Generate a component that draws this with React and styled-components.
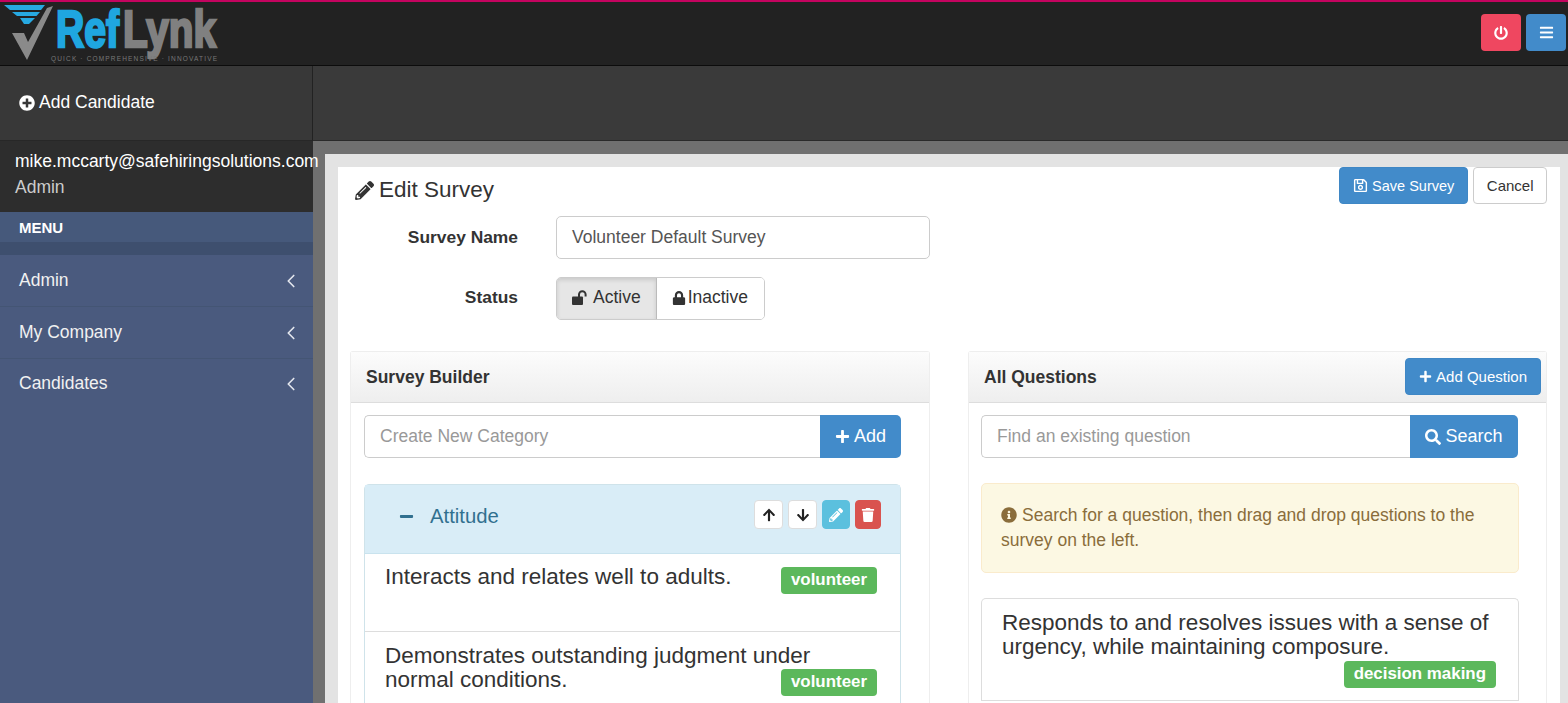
import React from 'react';
import styled, { createGlobalStyle } from 'styled-components';
import { ChevronLeft } from 'lucide-react';
import {
  FaPlusCircle, FaPencilAlt, FaRegSave, FaLock, FaPlus, FaSearch, FaInfoCircle,
  FaArrowUp, FaArrowDown, FaTrash, FaPowerOff, FaBars, FaMinus,
} from 'react-icons/fa';

const Global = createGlobalStyle`
  html, body { margin: 0; padding: 0; background: #e3e3e3; }
  body { font-family: "Liberation Sans", Arial, sans-serif; color: #333; font-size: 17.5px; }
  * { box-sizing: border-box; }
  svg { flex: none; }
`;

const Page = styled.div`
  width: 1568px; height: 703px; overflow: hidden; display: flex; flex-direction: column;
`;
const TopBar = styled.header`
  height: 66px; flex: none; background: #222; border-top: 2px solid #c4045f; border-bottom: 1px solid #0c0c0c;
  display: flex; align-items: flex-start; justify-content: space-between;
`;
const TopActions = styled.div`
  display: flex; gap: 5px; padding: 12px 0 0 0; margin-right: 2px;
`;
const TopButton = styled.button`
  width: ${p => p.$w}px; height: 37px; border: 0; border-radius: 4px; background: ${p => p.$bg}; color: #fff;
  display: flex; align-items: center; justify-content: center; padding: 0;
`;
const Main = styled.div`
  flex: 1; display: flex; min-height: 0;
`;
const Sidebar = styled.aside`
  width: 313px; flex: none; background: #4a5a7e; position: relative; z-index: 2;
`;
const AddCandidate = styled.div`
  height: 75px; background: #383838; border-right: 1px solid #222; border-bottom: 1px solid #272727;
  display: flex; align-items: center; padding: 0 0 1px 19px; color: #fff; font-size: 17.5px; gap: 4px;
`;
const UserBox = styled.div`
  height: 71px; background: #2d2d2d; padding: 7px 0 0 15px; white-space: nowrap; line-height: 26px;
`;
const Email = styled.div`
  color: #fff; font-size: 17.5px;
`;
const Role = styled.div`
  color: #ccc; font-size: 17.5px;
`;
const MenuHead = styled.div`
  height: 30px; background: #46597b; color: #fff; font-weight: 700; font-size: 15px; padding: 7px 0 0 19px;
`;
const MenuStrip = styled.div`
  height: 13px; background: #3e4f6e;
`;
const MenuItem = styled.div`
  height: ${p => p.$h}px; border-bottom: 1px solid ${p => (p.$last ? 'transparent' : '#445574')}; display: flex; align-items: center; justify-content: space-between;
  padding: 0 11px 0 19px; color: #f1f1f1; font-size: 17.5px;
`;
const Gutter = styled.main`
  flex: 1; background: #3a3a3a; min-width: 0; display: flex; flex-direction: column;
`;
const Banner = styled.div`
  height: 75px; flex: none; background: #3a3a3a; border-bottom: 1px solid #2a2a2a;
`;
const GreyFrame = styled.div`
  flex: 1; background: #707070; padding: 13px 0 0 12px; min-height: 0;
`;
const LightFrame = styled.div`
  height: 100%; background: #e3e3e3; padding: 13px 8px 0 13px;
`;
const Sheet = styled.div`
  height: 100%; background: #fff; padding: 0 13px 0 12px; overflow: hidden;
`;
const TitleRow = styled.div`
  display: flex; justify-content: space-between; align-items: flex-start; height: 49px;
`;
const Title = styled.h1`
  margin: 9px 0 0 5px; font-weight: 400; font-size: 22.5px; line-height: 28px; display: flex; align-items: center; gap: 5px; color: #333;
`;
const TitleActions = styled.div`
  display: flex; gap: 5px;
`;
const Btn = styled.button`
  height: 37px; padding: 0 ${p => p.$px ?? 13}px; border-radius: 4px; font-family: inherit; font-size: ${p => p.$fs || 15}px;
  border: 1px solid ${p => (p.$primary ? '#3f87c5' : '#ccc')};
  background: ${p => (p.$primary ? '#428bca' : '#fff')};
  color: ${p => (p.$primary ? '#fff' : '#333')};
  display: inline-flex; align-items: center; gap: 4px; white-space: nowrap;
`;
const HeadButton = styled(Btn)`
  align-self: flex-start; margin-top: 6px;
`;
const FormRow = styled.div`
  display: flex; align-items: center; margin-top: ${p => p.$mt || 0}px;
`;
const Label = styled.label`
  width: 168px; text-align: right; font-weight: 700; font-size: 17.4px; margin-right: 38px; color: #333;
  padding-bottom: ${p => p.$pb || 0}px;
`;
const TextInput = styled.div`
  width: 374px; height: 43px; border: 1px solid #ccc; border-radius: 5px; display: flex; align-items: center; padding-left: 15px;
  color: #555; font-size: 17.5px;
`;
const Toggle = styled.div`
  display: flex; height: 43px; border: 1px solid #ccc; border-radius: 5px; overflow: hidden; font-size: 17.5px; color: #333;
`;
const ToggleOption = styled.div`
  display: flex; align-items: center; gap: ${p => p.$gap}px; padding: 0 ${p => p.$pr}px 2px 15px;
  background: ${p => (p.$on ? '#e6e6e6' : '#fff')};
  box-shadow: ${p => (p.$on ? 'inset 0 2px 4px rgba(0,0,0,.13)' : 'none')};
  border-right: ${p => (p.$on ? '1px solid #bbb' : '0')};
`;
const Columns = styled.div`
  display: flex; gap: 38px; margin-top: 31px; align-items: flex-start;
`;
const Panel = styled.section`
  width: ${p => p.$w}px; flex: none; border: 1px solid #eee; border-bottom: 0; border-radius: 3px 3px 0 0; height: 400px;
`;
const PanelHead = styled.div`
  height: 51px; background: linear-gradient(#fcfcfc, #eeeeee); border-bottom: 1px solid #ddd;
  display: flex; align-items: center; justify-content: space-between; padding: 0 5px 0 15px; font-weight: 700; font-size: 17.5px; color: #333;
`;
const PanelBody = styled.div`
  padding: 12px ${p => p.$pr}px 0 ${p => p.$pl}px;
`;
const InputGroup = styled.div`
  display: flex; height: 43px; margin-right: ${p => p.$mr || 0}px;
`;
const GroupField = styled.div`
  flex: 1; border: 1px solid #ccc; border-right: 0; border-radius: 5px 0 0 5px; display: flex; align-items: center; padding-left: 15px; color: #999; font-size: 17.5px;
`;
const GroupButton = styled.button`
  width: ${p => p.$w}px; border: 0; border-radius: 0 5px 5px 0; background: #428bca; color: #fff; font-family: inherit; font-size: 18px;
  display: flex; align-items: center; justify-content: center; gap: 4px; padding: 0;
`;
const Category = styled.div`
  margin-top: 26px; border: 1px solid #cfe3ea; border-radius: 5px 5px 0 0; height: 260px;
`;
const CategoryHead = styled.div`
  height: 69px; background: #d9edf7; border-bottom: 1px solid #c9e3ee; display: flex; justify-content: space-between; align-items: flex-start;
  color: #31708f; font-size: 20.3px; padding: 0 19px 0 34px;
`;
const CategoryName = styled.div`
  display: flex; align-items: center; gap: 16px; height: 62px;
`;
const Tools = styled.div`
  display: flex; gap: 5px; padding-top: 15px;
`;
const Tool = styled.button`
  width: ${p => p.$w}px; height: 29px; border-radius: 4px; border: 1px solid ${p => p.$border}; background: ${p => p.$bg}; color: ${p => p.$color};
  display: flex; align-items: center; justify-content: center; padding: 0; font-size: 14px;
`;
const Row = styled.div`
  display: grid; height: ${p => p.$h}px; padding: ${p => p.$pad}; border-bottom: ${p => (p.$line ? '1px solid #ddd' : '0')};
`;
const RowText = styled.div`
  grid-area: 1 / 1; font-size: 22.5px; line-height: 24px; color: #333; white-space: nowrap;
`;
const Tag = styled.span`
  grid-area: 1 / 1; justify-self: end; align-self: start; margin-top: ${p => p.$mt}px; height: 27px; padding: 0 10px; border-radius: 4px; background: #5cb85c; color: #fff;
  font-weight: 700; font-size: 16.9px; line-height: 25px; white-space: nowrap;
`;
const Alert = styled.div`
  margin-top: 25px; height: 90px; background: #fcf8e3; border: 1px solid #faebcc; border-radius: 5px; color: #8a6d3b;
  padding: 19px 15px 0 19px; font-size: 17.5px; line-height: 25px;
`;
const InlineIcon = styled.span`
  display: inline-block; vertical-align: -2px; margin-right: 5px; font-size: 16px; line-height: 1;
`;
const QuestionCard = styled.div`
  margin-top: 25px; border: 1px solid #ddd; border-bottom: 0; border-radius: 5px 5px 0 0;
`;

const Logo = () => (
  <svg width="230" height="63" viewBox="0 0 230 63" role="img" aria-label="RefLynk">
    <path d="M4 3H45L41 8H10Z" fill="#27a9e1" />
    <path d="M12 10H40L36.500 14H17Z" fill="#27a9e1" />
    <path d="M20 16H35L29 22H24Z" fill="#27a9e1" />
    <path d="M12 31L24 31L28 40L47 6L53 4L27 58Z" fill="#8a8a8a" />
    <text x="56" y="45" fontFamily="Liberation Sans" fontWeight="700" fontSize="52" fill="#1fa6e0" stroke="#1fa6e0" strokeWidth="2.6" textLength="63" lengthAdjust="spacingAndGlyphs">Ref</text>
    <text x="123" y="45" fontFamily="Liberation Sans" fontWeight="700" fontSize="52" fill="#808080" stroke="#808080" strokeWidth="2.6" textLength="93" lengthAdjust="spacingAndGlyphs">Lynk</text>
    <text x="51" y="59" fontFamily="Liberation Sans" fontSize="6.500" fill="#787878" textLength="166" lengthAdjust="spacing">QUICK · COMPREHENSIVE · INNOVATIVE</text>
  </svg>
);

const OpenLock = () => (
  <svg width="17" height="15" viewBox="0 0 17 15" aria-hidden="true">
    <rect x="0" y="6.500" width="11" height="8.500" rx="1" fill="currentColor" />
    <path d="M7 7V4.500a3.300 3.300 0 0 1 6.600 0V6.500" fill="none" stroke="currentColor" strokeWidth="2" />
  </svg>
);

const Chevron = () => <ChevronLeft size={22} strokeWidth={1.8} color="#e4e7ee" />;

export default function App() {
  return (
    <Page>
      <Global />
      <TopBar>
        <Logo />
        <TopActions>
          <TopButton $w={40} $bg="#ef4760"><FaPowerOff size={14} /></TopButton>
          <TopButton $w={40} $bg="#428bca"><FaBars size={15} /></TopButton>
        </TopActions>
      </TopBar>
      <Main>
        <Sidebar>
          <AddCandidate><FaPlusCircle size={16} />Add Candidate</AddCandidate>
          <UserBox>
            <Email>mike.mccarty@safehiringsolutions.com</Email>
            <Role>Admin</Role>
          </UserBox>
          <MenuHead>MENU</MenuHead>
          <MenuStrip />
          <MenuItem $h={52}>Admin<Chevron /></MenuItem>
          <MenuItem $h={52}>My Company<Chevron /></MenuItem>
          <MenuItem $h={50} $last>Candidates<Chevron /></MenuItem>
        </Sidebar>
        <Gutter>
          <Banner />
          <GreyFrame>
            <LightFrame>
              <Sheet>
                <TitleRow>
                  <Title><FaPencilAlt size={19} />Edit Survey</Title>
                  <TitleActions>
                    <Btn $primary $fs={14.5}><FaRegSave size={15} />Save Survey</Btn>
                    <Btn $px={12.5}>Cancel</Btn>
                  </TitleActions>
                </TitleRow>
                <FormRow>
                  <Label>Survey Name</Label>
                  <TextInput>Volunteer Default Survey</TextInput>
                </FormRow>
                <FormRow $mt={18}>
                  <Label $pb={2}>Status</Label>
                  <Toggle>
                    <ToggleOption $on $pr={15} $gap={4}><OpenLock />Active</ToggleOption>
                    <ToggleOption $pr={16} $gap={2}><FaLock size={14} />Inactive</ToggleOption>
                  </Toggle>
                </FormRow>
                <Columns>
                  <Panel $w={580}>
                    <PanelHead>Survey Builder</PanelHead>
                    <PanelBody $pl={13} $pr={28}>
                      <InputGroup>
                        <GroupField>Create New Category</GroupField>
                        <GroupButton $w={81}><FaPlus size={15} />Add</GroupButton>
                      </InputGroup>
                      <Category>
                        <CategoryHead>
                          <CategoryName><FaMinus size={15} />Attitude</CategoryName>
                          <Tools>
                            <Tool $w={29} $bg="#fff" $border="#ddd" $color="#222"><FaArrowUp /></Tool>
                            <Tool $w={29} $bg="#fff" $border="#ddd" $color="#222"><FaArrowDown /></Tool>
                            <Tool $w={28} $bg="#5bc0de" $border="#5bc0de" $color="#fff"><FaPencilAlt /></Tool>
                            <Tool $w={26} $bg="#d9534f" $border="#d9534f" $color="#fff"><FaTrash /></Tool>
                          </Tools>
                        </CategoryHead>
                        <Row $h={78} $pad="11px 23px 0 20px" $line>
                          <RowText>Interacts and relates well to adults.</RowText>
                          <Tag $mt={2}>volunteer</Tag>
                        </Row>
                        <Row $h={70} $pad="12px 23px 0 20px">
                          <RowText>Demonstrates outstanding judgment under<br />normal conditions.</RowText>
                          <Tag $mt={25}>volunteer</Tag>
                        </Row>
                      </Category>
                    </PanelBody>
                  </Panel>
                  <Panel $w={579}>
                    <PanelHead>All Questions<HeadButton $primary><FaPlus size={13} />Add Question</HeadButton></PanelHead>
                    <PanelBody $pl={12} $pr={27}>
                      <InputGroup $mr={1}>
                        <GroupField>Find an existing question</GroupField>
                        <GroupButton $w={108}><FaSearch size={16} />Search</GroupButton>
                      </InputGroup>
                      <Alert>
                        <InlineIcon><FaInfoCircle /></InlineIcon>
                        Search for a question, then drag and drop questions to the<br />survey on the left.
                      </Alert>
                      <QuestionCard>
                        <Row $h={102} $pad="12px 22px 0 20px" $line>
                          <RowText>Responds to and resolves issues with a sense of<br />urgency, while maintaining composure.</RowText>
                          <Tag $mt={50}>decision making</Tag>
                        </Row>
                      </QuestionCard>
                    </PanelBody>
                  </Panel>
                </Columns>
              </Sheet>
            </LightFrame>
          </GreyFrame>
        </Gutter>
      </Main>
    </Page>
  );
}
